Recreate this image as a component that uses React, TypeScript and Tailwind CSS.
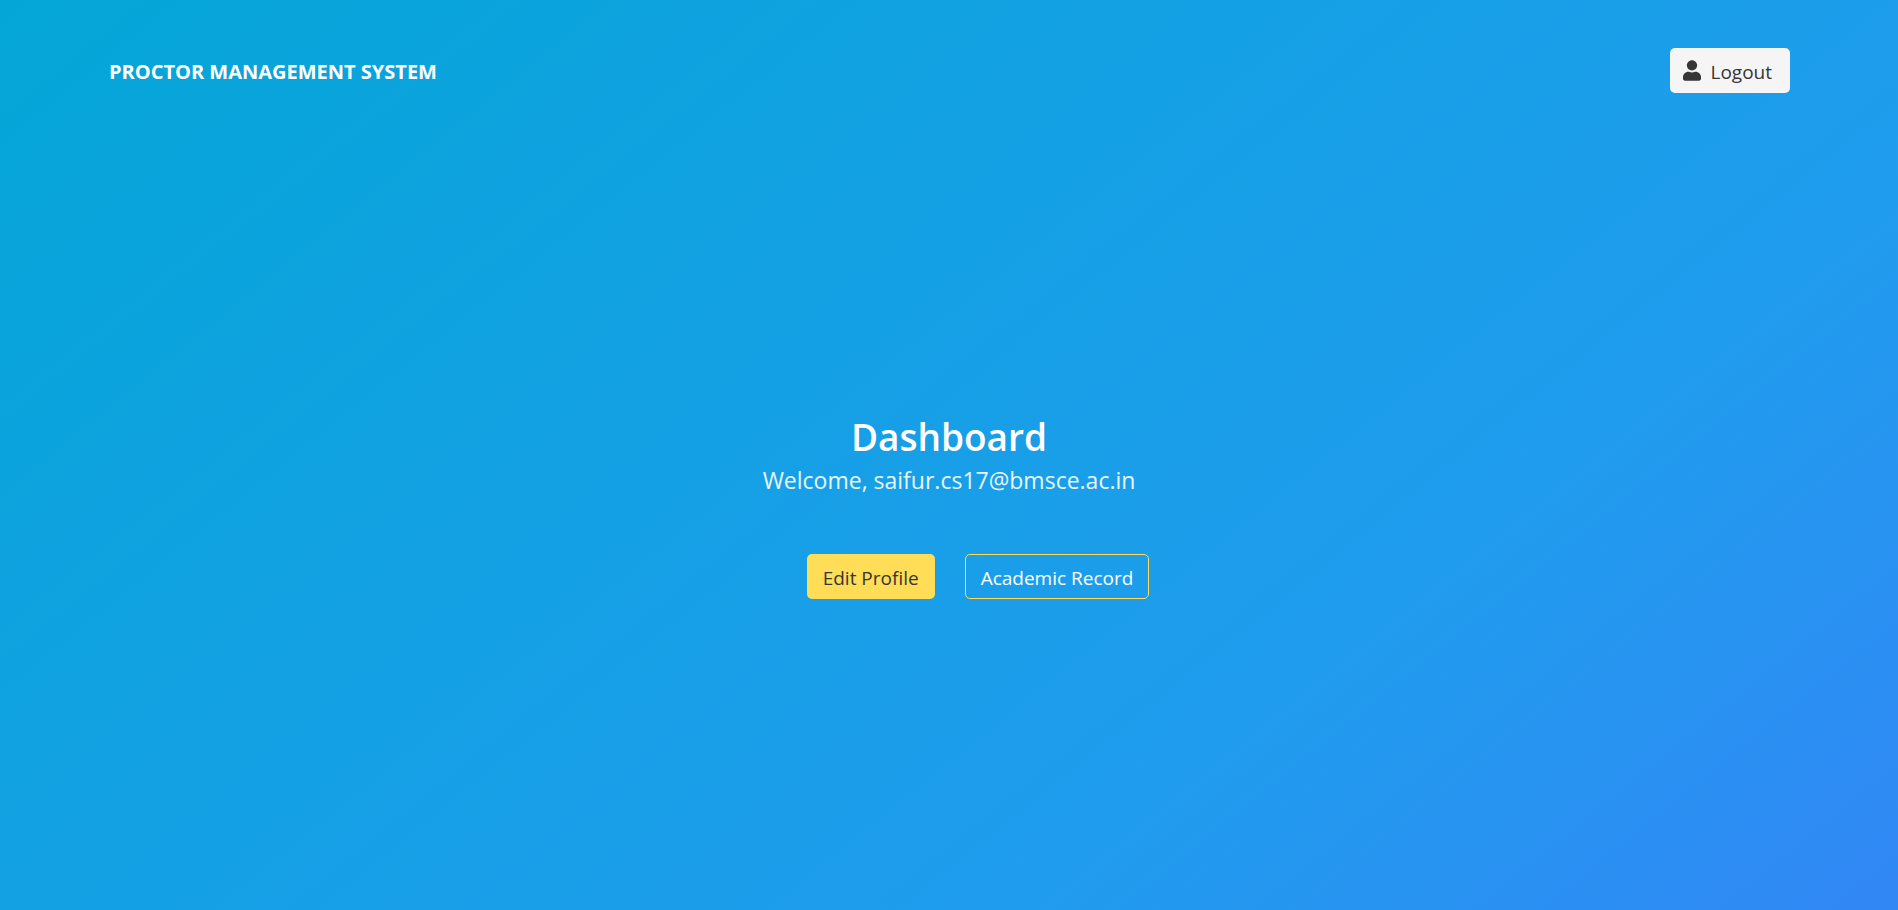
export default function App() {
  return (
    <div className="flex min-h-screen flex-col bg-[linear-gradient(141deg,#04a6d7_0%,#209cee_71%,#3287f5_100%)] font-['Open_Sans','Noto_Sans',sans-serif] text-[19px] leading-[30px] text-white">
      <header className="flex items-center justify-between pl-[109px] pr-[108px] pt-12">
        <a href="#home" className="pt-0.5 text-[20px] font-bold">PROCTOR MANAGEMENT SYSTEM</a>
        <button type="button" className="flex h-[45px] items-center gap-[9px] rounded-[5px] bg-[#f5f5f5] pl-[13px] pr-[18px] text-[#363636]">
          <svg viewBox="0 0 448 512" className="h-[21px] w-[18px]" fill="currentColor" aria-hidden="true">
            <path d="M224 256c70.700 0 128-57.300 128-128S294.700 0 224 0 96 57.300 96 128s57.300 128 128 128zm89.600 32h-16.700c-22.200 10.200-46.900 16-72.900 16s-50.600-5.800-72.900-16h-16.700C60.200 288 0 348.200 0 422.400V464c0 26.500 21.500 48 48 48h352c26.500 0 48-21.500 48-48v-41.600c0-74.200-60.200-134.400-134.400-134.400z" />
          </svg>
          <span className="pt-0.5">Logout</span>
        </button>
      </header>
      <main className="flex grow flex-col items-center justify-center pt-2">
        <h1 className="text-[37px] font-semibold leading-[50px]">Dashboard</h1>
        <p className="text-[23px] leading-[36px] text-white/90">Welcome, saifur.cs17@bmsce.ac.in</p>
        <nav className="mt-14 ml-[58px] flex gap-[30px]">
          <button type="button" className="h-[45px] rounded-[5px] bg-[#ffdd57] px-4 pt-0.5 text-[#363636]">Edit Profile</button>
          <button type="button" className="h-[45px] rounded-[5px] border border-[#ffdd57] px-[15px] pt-0.5">Academic Record</button>
        </nav>
      </main>
    </div>
  );
}
